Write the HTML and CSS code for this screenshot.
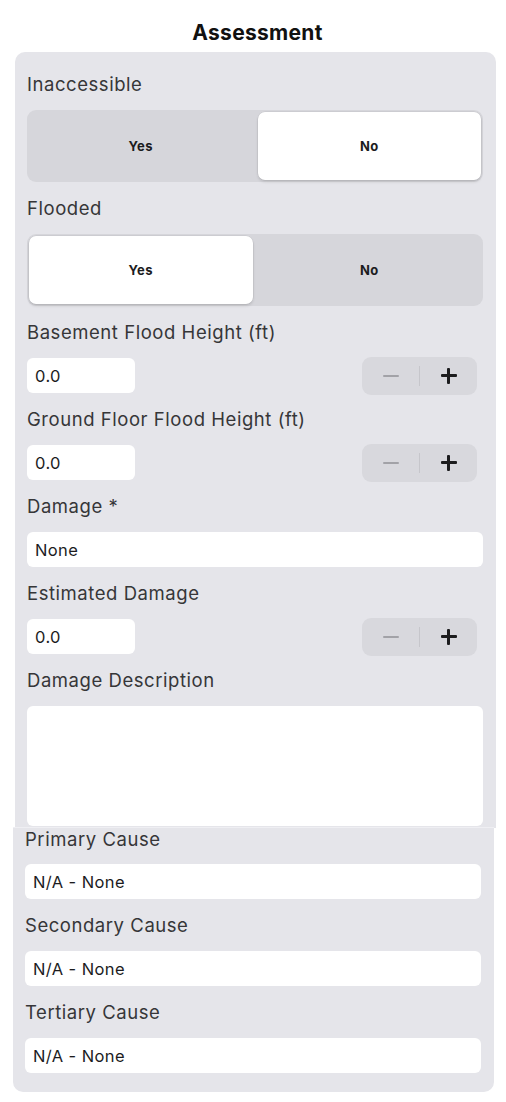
FILE: index.html
```html
<!DOCTYPE html>
<html lang="en">

<head>
    <meta charset="UTF-8">
    <meta name="viewport" content="width=device-width, initial-scale=1.0">
    <title>Assessment</title>
    <link rel="stylesheet" href="styles.css">
</head>

<body>
    <div class="screen">
        <h1 class="screen-title">Assessment</h1>

        <div class="panel panel-top">
            <label class="field-label">Inaccessible</label>
            <div class="segmented">
                <div class="segment">Yes</div>
                <div class="segment selected">No</div>
            </div>

            <label class="field-label">Flooded</label>
            <div class="segmented">
                <div class="segment selected">Yes</div>
                <div class="segment">No</div>
            </div>

            <label class="field-label">Basement Flood Height (ft)</label>
            <div class="stepper-row">
                <div class="input short">0.0</div>
                <div class="stepper">
                    <span class="step minus"></span>
                    <span class="step-divider"></span>
                    <span class="step plus"></span>
                </div>
            </div>

            <label class="field-label">Ground Floor Flood Height (ft)</label>
            <div class="stepper-row">
                <div class="input short">0.0</div>
                <div class="stepper">
                    <span class="step minus"></span>
                    <span class="step-divider"></span>
                    <span class="step plus"></span>
                </div>
            </div>

            <label class="field-label">Damage *</label>
            <div class="input">None</div>

            <label class="field-label">Estimated Damage</label>
            <div class="stepper-row">
                <div class="input short">0.0</div>
                <div class="stepper">
                    <span class="step minus"></span>
                    <span class="step-divider"></span>
                    <span class="step plus"></span>
                </div>
            </div>

            <label class="field-label">Damage Description</label>
            <div class="textarea"></div>
        </div>

        <div class="panel panel-bottom">
            <label class="field-label">Primary Cause</label>
            <div class="input">N/A - None</div>

            <label class="field-label">Secondary Cause</label>
            <div class="input">N/A - None</div>

            <label class="field-label">Tertiary Cause</label>
            <div class="input">N/A - None</div>
        </div>
    </div>
</body>

</html>
```

FILE: styles.css
```css
body {
    margin: 0;
    background: #ffffff;
    font-family: Inter, "Noto Sans", sans-serif;
    color: #1c1c1e;
}

.screen {
    padding: 20px 0 10px;
}

.screen-title {
    width: 481px;
    margin: 0 0 6px 17px;
    font-size: 21px;
    line-height: 26px;
    font-weight: 700;
    letter-spacing: 0.3px;
    text-align: center;
    color: #111;
}

.panel {
    width: 481px;
    box-sizing: border-box;
    background: #e5e5ea;
    padding: 20px 13px 0 12px;
    display: flex;
    flex-direction: column;
}

.panel-top {
    margin-left: 15px;
    border-radius: 10px 10px 0 0;
    padding-bottom: 2px;
}

.panel-bottom {
    margin-left: 13px;
    padding-top: 0;
    padding-bottom: 19px;
    border-radius: 0 0 10px 10px;
    border-top: 1px solid #efeff3;
    margin-top: -1px;
}

.field-label {
    display: block;
    font-size: 18.5px;
    line-height: 24px;
    letter-spacing: 0.55px;
    color: #363638;
    margin: 14px 0;
}

.panel > .field-label:first-child {
    margin-top: 0;
}

.panel-bottom > .field-label:first-child {
    line-height: 22px;
}

.segmented {
    display: flex;
    gap: 5px;
    height: 72px;
    padding: 2px;
    box-sizing: border-box;
    background: #d6d6db;
    border-radius: 9px;
}

.segment {
    flex: 1;
    display: flex;
    align-items: center;
    justify-content: center;
    font-size: 13px;
    font-weight: 700;
    letter-spacing: 0.4px;
    color: #1c1c1e;
    border-radius: 7px;
}

.segment.selected {
    background: #ffffff;
    box-shadow: 0 0 0 0.5px rgba(0, 0, 0, 0.08), 0 2px 3px rgba(0, 0, 0, 0.12);
}

.input {
    height: 35px;
    box-sizing: border-box;
    background: #ffffff;
    border-radius: 6px;
    padding: 0 8px;
    display: flex;
    align-items: center;
    font-size: 16.5px;
    letter-spacing: 0.4px;
    color: #1c1c1e;
}

.input.short {
    width: 108px;
}

.stepper-row {
    display: flex;
    align-items: center;
    justify-content: space-between;
    height: 35px;
}

.stepper {
    display: flex;
    align-items: center;
    width: 115px;
    height: 38px;
    flex-shrink: 0;
    margin-right: 6px;
    background: #d8d8dd;
    border-radius: 9px;
}

.step {
    flex: 1;
    height: 100%;
    position: relative;
}

.step::before,
.step::after {
    content: "";
    position: absolute;
    left: 50%;
    top: 50%;
    border-radius: 1px;
}

.minus::before {
    width: 16px;
    height: 2px;
    margin: -1px 0 0 -8px;
    background: #a2a2a7;
}

.plus::before {
    width: 16px;
    height: 2.2px;
    margin: -1.1px 0 0 -8px;
    background: #1c1c1e;
}

.plus::after {
    width: 2.2px;
    height: 16px;
    margin: -8px 0 0 -1.1px;
    background: #1c1c1e;
}

.step-divider {
    width: 1px;
    height: 20px;
    background: #c6c6cb;
}

.textarea {
    height: 120px;
    background: #ffffff;
    border-radius: 6px;
}
```
